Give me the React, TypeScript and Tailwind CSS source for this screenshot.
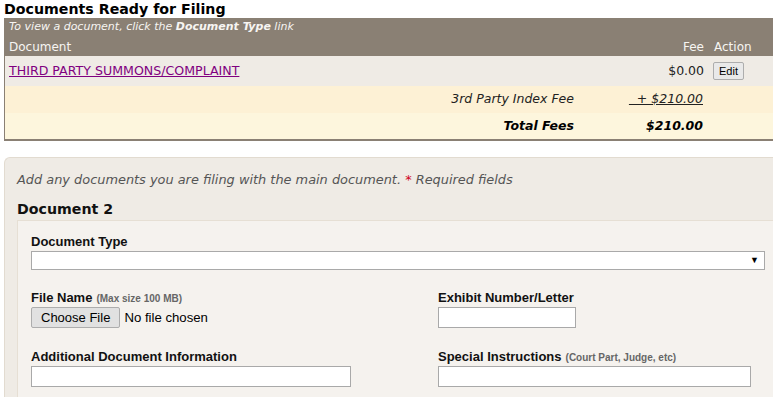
import React from 'react';

const verdana = { fontFamily: '"DejaVu Sans", Verdana, sans-serif' };

const Field: React.FC<{ label: string; note?: string; children: React.ReactNode }> = ({ label, note, children }) => (
  <div className="flex flex-col">
    <div className="h-[18px] leading-[18px] text-[13px] font-bold text-[#111] whitespace-nowrap">
      {label}
      {note && <span className="ml-[4px] text-[10px] text-[#666]">{note}</span>}
    </div>
    {children}
  </div>
);

const TextBox: React.FC<{ width: string }> = ({ width }) => (
  <div className={`${width} h-[21px] bg-white border border-[#a9a9a9]`} />
);

export default function App() {
  return (
    <div className="w-[773px] h-[397px] overflow-hidden bg-white text-[#222]" style={verdana}>
      {/* Ready for filing */}
      <h1 className="h-[18px] pl-[4px] text-[14.2px] leading-[18px] font-bold text-black whitespace-nowrap">
        Documents Ready for Filing
      </h1>

      <div className="ml-[4px] w-[820px] border-l border-b-2 border-[#8a8074]">
        <div className="bg-[#8a8074] text-[#f7f5f2]">
          <div className="h-[18px] leading-[18px] pl-[4px] text-[11px] italic">
            To view a document, click the <b>Document Type</b> link
          </div>
          <div className="flex h-[20px] leading-[22px] text-[12px]">
            <div className="w-[634px] pl-[4px]">Document</div>
            <div className="w-[69px] pr-[4px] text-right">Fee</div>
            <div className="pl-[6px]">Action</div>
          </div>
        </div>

        <div className="flex items-center h-[30px] bg-[#efebe5] text-[12.5px]">
          <div className="w-[634px] pl-[4px]">
            <a href="#" className="text-[#800080] underline text-[12.6px]">THIRD PARTY SUMMONS/COMPLAINT</a>
          </div>
          <div className="w-[69px] pr-[4px] text-right">$0.00</div>
          <div className="pl-[5px]">
            <button
              className="h-[18px] px-[5px] text-[11px] leading-[16px] text-black bg-[#e9e9e9] border border-[#adadad] rounded-[2px]"
              style={{ fontFamily: '"Liberation Sans", Arial, sans-serif' }}
            >
              Edit
            </button>
          </div>
        </div>

        <div className="flex items-center h-[27px] bg-[#fdf1d5] text-[12.5px] italic">
          <div className="w-[569px] text-right">3rd Party Index Fee</div>
          <div className="w-[129px] text-right">
            <span className="underline">{'\u00a0 + $210.00'}</span>
          </div>
        </div>
        <div className="flex items-center h-[26px] bg-[#fdf6dd] text-[12.5px] italic font-bold text-black">
          <div className="w-[569px] text-right">Total Fees</div>
          <div className="w-[129px] text-right">$210.00</div>
        </div>
      </div>

      {/* Additional documents */}
      <div className="mt-[16px] ml-[4px] w-[820px] bg-[#efebe5] border-t border-l border-[#e2dbd0] rounded-tl-[6px]">
        <p className="pl-[12px] pt-[13px] h-[40px] text-[12.9px] leading-[18px] italic text-[#555]">
          Add any documents you are filing with the main document. <span className="text-[#d0021b] not-italic">*</span> Required fields
        </p>
        <h2 className="pl-[12px] h-[22px] pt-[2px] text-[14.2px] leading-[18px] font-bold text-[#111]">Document 2</h2>

        <div
          className="ml-[12px] bg-[#f5f2ee] border-t border-l border-[#e6dfd4] pl-[13px] pt-[12px] pb-[12px]"
          style={{ fontFamily: '"Liberation Sans", Arial, sans-serif' }}
        >
          <Field label="Document Type">
            <div className="relative w-[734px] h-[19px] bg-white border border-[#a9a9a9]">
              <span className="absolute right-[5px] top-[2px] text-[9px] leading-[13px] text-black">▼</span>
            </div>
          </Field>

          <div className="grid grid-cols-[407px_1fr] gap-y-[20px] mt-[19px]">
            <Field label="File Name" note="(Max size 100 MB)">
              <div className="flex items-center h-[21px] text-[13px] text-black">
                <button className="h-[21px] px-[9px] bg-[#e1e1e1] border border-[#adadad] rounded-[2px] text-[13px]">
                  Choose File
                </button>
                <span className="ml-[4px] text-[13.2px]">No file chosen</span>
              </div>
            </Field>
            <Field label="Exhibit Number/Letter">
              <TextBox width="w-[138px]" />
            </Field>
            <Field label="Additional Document Information">
              <TextBox width="w-[320px]" />
            </Field>
            <Field label="Special Instructions" note="(Court Part, Judge, etc)">
              <TextBox width="w-[313px]" />
            </Field>
          </div>
        </div>
      </div>
    </div>
  );
}
